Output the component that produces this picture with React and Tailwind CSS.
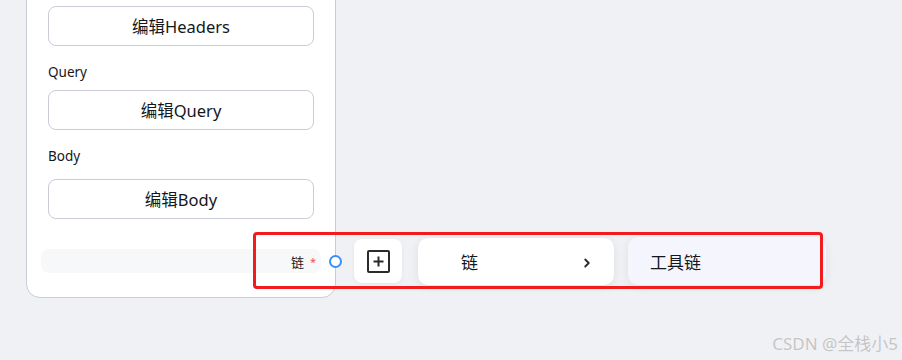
import { ChevronRight } from 'lucide-react';

function EditButton({ children }) {
  return (
    <button className="h-[40px] w-full rounded-[8px] border border-[#c9ccd6] bg-white pt-[2px] text-[16.5px] text-[#14171c]">
      {children}
    </button>
  );
}

function PlusIcon() {
  return (
    <svg width="23" height="23" viewBox="0 0 23 23" fill="none" stroke="#2b2b2b" strokeWidth="2">
      <rect x="1" y="1" width="21" height="21" rx="1" />
      <path d="M11.5 6.5v10M6.5 11.5h10" />
    </svg>
  );
}

export default function App() {
  return (
    <div className="relative h-[360px] w-full overflow-hidden bg-[#f0f1f5] font-['Noto_Sans','Noto_Sans_CJK_SC',sans-serif]">
      {/* node card, top cut off */}
      <div className="relative ml-[26px] mt-[-14px] w-[310px] rounded-[14px] border border-[#c9ccd6] bg-white px-[21px] pb-[24px] pt-[19px]">
        <EditButton>编辑Headers</EditButton>
        <div className="mb-[8px] mt-[16px] text-[13.5px] leading-[20px] text-[#14171c]">Query</div>
        <EditButton>编辑Query</EditButton>
        <div className="mb-[13px] mt-[16px] text-[13.5px] leading-[20px] text-[#14171c]">Body</div>
        <EditButton>编辑Body</EditButton>

        <div className="-mx-[7px] mt-[30px] flex h-[24px] items-center justify-end rounded-[8px] bg-[#f7f8fa] pr-[5px] pt-[3px] text-[13px] text-[#14171c]">
          <span>链</span>
          <span className="ml-[6px] text-[11px] text-[#f0524f]">*</span>
        </div>

        {/* output handle */}
        <div className="absolute right-[-7px] top-[268px] h-[13px] w-[13px] rounded-full border-[2.5px] border-[#3b8ff6] bg-white" />
      </div>

      {/* add menu popup */}
      <div className="absolute left-[354px] top-[237px] flex items-center">
        <div className="flex h-[44px] w-[48px] items-center justify-center rounded-[8px] bg-white shadow-[0_1px_4px_rgba(0,0,0,0.06)]">
          <PlusIcon />
        </div>
        <div className="ml-[16px] flex h-[47px] w-[196px] items-center justify-between rounded-[10px] bg-white pl-[43px] pr-[20px] pt-[4px] text-[17px] text-[#14171c] shadow-[0_2px_10px_rgba(0,0,0,0.08)]">
          <span>链</span>
          <ChevronRight size={14} strokeWidth={3.2} className="text-[#2b2b2b]" />
        </div>
        <div className="ml-[14px] flex h-[48px] w-[198px] items-center rounded-[10px] bg-[#f5f6fd] pl-[22px] pt-[3px] text-[17px] text-[#14171c] shadow-[0_2px_10px_rgba(0,0,0,0.08)]">
          工具链
        </div>
      </div>

      {/* annotation box */}
      <div className="absolute left-[253px] top-[232px] h-[57px] w-[570px] rounded-[4px] border-[3px] border-[#f21c1c]" />

      <div className="absolute bottom-[4px] right-[4px] text-[17px] text-[#c4c4c4] [text-shadow:0_0_1px_#fff]">
        CSDN @全栈小5
      </div>
    </div>
  );
}
